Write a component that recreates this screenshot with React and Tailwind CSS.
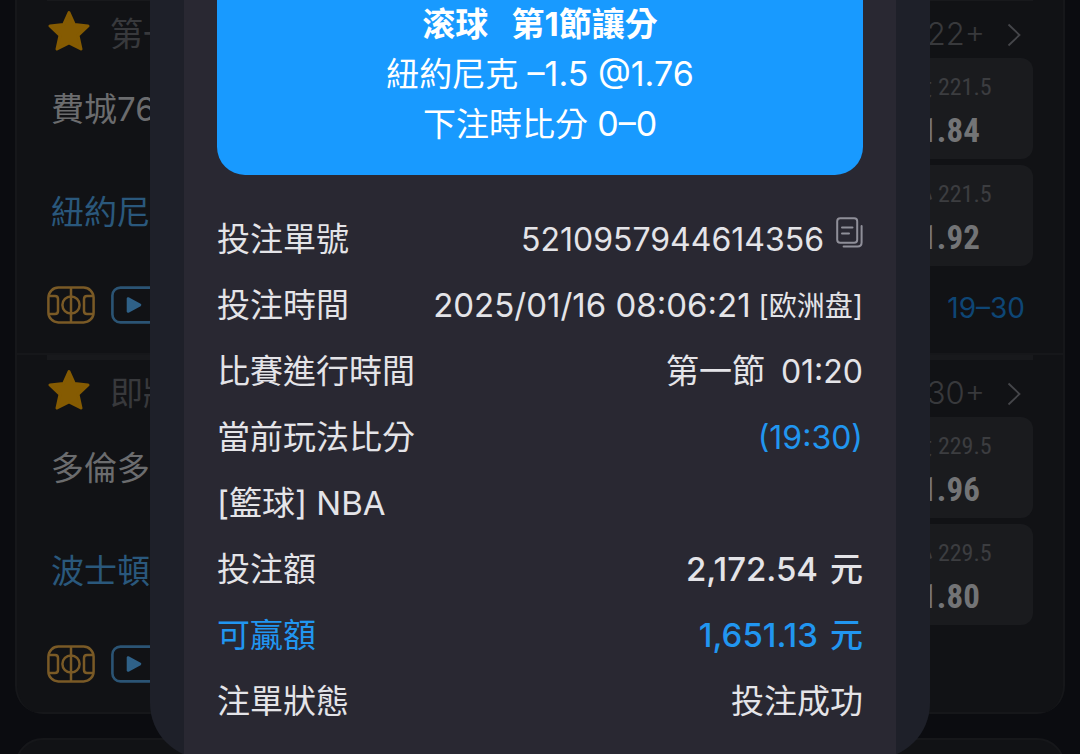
import React from 'react';
import { clsx } from 'clsx';

const matches = [
  {
    id: 1,
    period: '第一節',
    markets: '22+',
    home: '費城76人',
    away: '紐約尼克',
    score: '19–30',
    odds: [
      { label: '大 221.5', value: '1.84' },
      { label: '小 221.5', value: '1.92' },
    ],
  },
  {
    id: 2,
    period: '即將',
    markets: '30+',
    home: '多倫多',
    away: '波士頓',
    score: null,
    odds: [
      { label: '大 229.5', value: '1.96' },
      { label: '小 229.5', value: '1.80' },
    ],
  },
];

const StarIcon = () => (
  <svg viewBox="0 0 42 42" className="h-[42px] w-[42px]" fill="#855b02" stroke="#855b02" strokeWidth="3" strokeLinejoin="round">
    <path d="M21 2.5 L26.4 14.6 L40 16 L30 25.4 L33 39 L21 32.8 L9 39 L12 25.4 L2 16 L15.6 14.6 Z" />
  </svg>
);

const CourtIcon = () => (
  <svg viewBox="0 0 48 38" className="h-[38px] w-12" fill="none" stroke="#7a5a26" strokeWidth="2.5">
    <rect x="1.4" y="1.6" width="45.2" height="34.8" rx="10" />
    <path d="M24 1.6 V36.4" />
    <circle cx="24" cy="19" r="8.6" />
    <path d="M1.4 10 H8 Q11 10 11 13 V25 Q11 28 8 28 H1.4" />
    <path d="M46.6 10 H40 Q37 10 37 13 V25 Q37 28 40 28 H46.6" />
  </svg>
);

const VideoIcon = () => (
  <svg viewBox="0 0 48 38" className="h-[38px] w-12" fill="none" stroke="#2b5474" strokeWidth="2.6">
    <rect x="1.4" y="1.6" width="45.2" height="34.8" rx="8" />
    <path d="M17 12.5 L29 19 L17 25.5 Z" fill="#2f6188" stroke="#2f6188" strokeLinejoin="round" />
  </svg>
);

const ChevronIcon = () => (
  <svg viewBox="0 0 14 24" className="h-6 w-3.5" fill="none" stroke="#45464a" strokeWidth="1.8">
    <path d="M1.5 1.5 L12.5 12 L1.5 22.5" />
  </svg>
);

const CopyIcon = () => (
  <svg viewBox="0 0 27 31" className="h-[31px] w-[27px]" fill="none" stroke="#8f8f99" strokeWidth="2" strokeLinecap="round">
    <rect x="1.2" y="1.2" width="20" height="24.6" rx="3" />
    <path d="M25.6 9 V25.6 Q25.6 29.6 21.6 29.6 H7.6" />
    <path d="M6 10.5 H16.5 M6 16.5 H13" />
  </svg>
);

const Match = ({ match }) => (
  <section className="border-b-2 border-[#16171a] px-[30px]">
    <div className="h-[5px] bg-[#18191c]" />
    <header className="flex h-[57px] items-center justify-between pt-2.5 text-[#38393c]">
      <div className="flex items-center gap-5">
        <button type="button" aria-label="收藏" className="ml-px pb-2">
          <StarIcon />
        </button>
        <span className="text-[33px]">{match.period}</span>
      </div>
      <button type="button" className="mr-3 flex items-center gap-[22px] text-[31px] font-light">
        {match.markets}
        <ChevronIcon />
      </button>
    </header>

    <div className="flex justify-between">
      <div className="flex flex-col pl-1 text-[33px]">
        <span className="flex h-[103px] items-center text-[#6b6c6e]">{match.home}</span>
        <span className="flex h-[103px] items-center text-[#2a587c]">{match.away}</span>
      </div>
      <div className="flex w-[166px] flex-col gap-1.5 font-['Roboto_Condensed','Roboto','Noto_Sans_CJK_TC',sans-serif]">
        {match.odds.map((odd) => (
          <button
            key={odd.label}
            type="button"
            className="flex h-[101px] flex-col items-center justify-center rounded-xl bg-[#1a1b1e]"
          >
            <span className="text-[24px] leading-[44px] text-[#3c3d40]">{odd.label}</span>
            <span className="text-[33px] leading-[44px] font-bold text-[#737476]">{odd.value}</span>
          </button>
        ))}
      </div>
    </div>

    <footer className="flex h-[87px] justify-between pt-5">
      <div className="flex h-[38px] items-center gap-4">
        <CourtIcon />
        <VideoIcon />
      </div>
      {match.score && <span className="mr-2 text-[28px] leading-[44px] text-[#0e4675]">{match.score}</span>}
    </footer>
  </section>
);

const Row = ({ label, accent, children }) => (
  <div className={clsx('flex h-[66px] items-center justify-between', accent && 'text-[#2196f0]')}>
    <dt>{label}</dt>
    <dd className="flex items-center text-right">{children}</dd>
  </div>
);

const BetSlip = () => (
  <div
    role="dialog"
    aria-label="注單詳情"
    className="absolute inset-x-[150px] top-0 overflow-hidden rounded-b-[56px] bg-[#1e2029] px-[34px] text-[33px] text-[#e4e4e8]"
  >
    <div className="bg-[#292832] px-[33px] pb-6">
      <div className="rounded-b-[28px] bg-[#189aff] pb-[26px] text-center leading-[49px] text-white">
        <h2 className="font-bold whitespace-pre">滚球{'   '}第1節讓分</h2>
        <p>
          紐約尼克 <span className="text-[34px]">–1.5 @1.76</span>
        </p>
        <p>
          下注時比分 <span className="text-[34px]">0–0</span>
        </p>
      </div>

      <dl className="pt-8">
        <Row label="投注單號">
          <span className="text-[32px]">5210957944614356</span>
          <button type="button" aria-label="複製" className="ml-3 pb-4">
            <CopyIcon />
          </button>
        </Row>
        <Row label="投注時間">
          <span>2025/01/16 08:06:21</span>
          <span className="ml-2 text-[28px]">[欧洲盘]</span>
        </Row>
        <Row label="比賽進行時間">
          <span>第一節</span>
          <span className="ml-4 text-[32px]">01:20</span>
        </Row>
        <Row label="當前玩法比分">
          <span className="text-[32px] text-[#2196f0]">(19:30)</span>
        </Row>
        <Row label="[籃球] NBA" />
        <Row label="投注額">
          <span className="font-medium">2,172.54</span>
          <span className="ml-3 font-medium">元</span>
        </Row>
        <Row label="可贏額" accent>
          <span className="font-medium">1,651.13</span>
          <span className="ml-3 font-medium">元</span>
        </Row>
        <Row label="注單狀態">投注成功</Row>
      </dl>
    </div>
  </div>
);

const App = () => {
  return (
    <div className="relative h-screen overflow-hidden bg-[#0b0c10] font-['Inter','Noto_Sans_CJK_TC',sans-serif]">
      <main className="-mt-1 flex flex-col gap-6 px-[15px]">
        <div className="overflow-hidden rounded-b-[28px] border-x-2 border-[#16171a] bg-[#111215]">
          {matches.map((match) => (
            <Match key={match.id} match={match} />
          ))}
        </div>
        <div className="h-20 rounded-t-[28px] border-2 border-[#16171a] bg-[#111215]" />
      </main>
      <BetSlip />
    </div>
  );
};

export default App;
